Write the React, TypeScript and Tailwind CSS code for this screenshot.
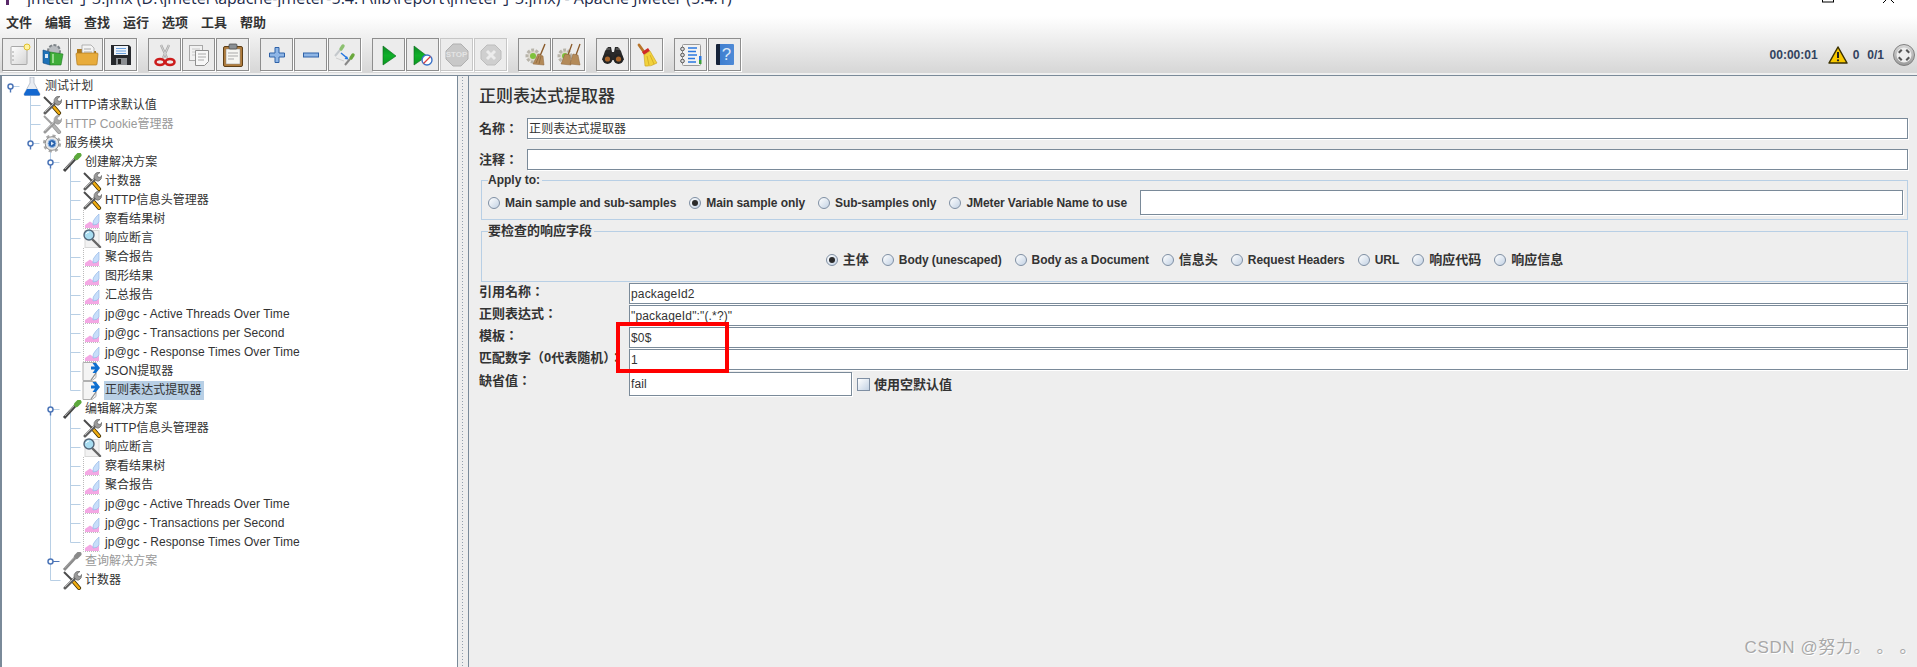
import React from "react";

const NewDoc = () => (
  <svg width="24" height="24" viewBox="0 0 24 24">
    <defs><linearGradient id="pg" x1="0" y1="0" x2="1" y2="1"><stop offset="0" stopColor="#fff" /><stop offset="1" stopColor="#d4d4d4" /></linearGradient></defs>
    <rect x="4" y="3.5" width="16" height="18" rx="1" fill="url(#pg)" stroke="#a8a8a8" />
    <circle cx="6" cy="9" r=".7" fill="#888" /><circle cx="6" cy="13" r=".7" fill="#888" /><circle cx="6" cy="17" r=".7" fill="#888" />
    <circle cx="20" cy="4" r="3" fill="#fff3a0" stroke="#e0c030" />
  </svg>
);
const Templates = () => (
  <svg width="24" height="24" viewBox="0 0 24 24">
    <circle cx="13" cy="8" r="6" fill="#b8bcc0" stroke="#7d8388" strokeWidth="2" strokeDasharray="3 1.5" />
    <path d="M2 7l7 2v13l-7-2z" fill="#1f72b8" stroke="#124a80" strokeWidth=".6" />
    <rect x="4" y="11" width="3" height="4" fill="#d9e8f5" />
    <path d="M9 9l13 2-2 11H9z" fill="#3fae3a" stroke="#1f7a22" strokeWidth=".6" />
    <path d="M12 11v9" stroke="#b6e8a8" strokeWidth="1.5" />
  </svg>
);
const OpenFolder = () => (
  <svg width="24" height="24" viewBox="0 0 24 24">
    <path d="M2 6h7l2 2h10v12H2z" fill="#b07a1c" />
    <path d="M7 2h9l3 3v11H7z" fill="#f4f4f4" stroke="#999" strokeWidth=".7" />
    <path d="M9 6h7M9 9h8M9 12h8" stroke="#aaa" />
    <path d="M1 11q0-1 1-1h20q1 0 1 1l-1 10q0 1-1 1H3q-1 0-1-1z" fill="#e8ac3c" stroke="#b07a1c" strokeWidth=".7" />
  </svg>
);
const Save = () => (
  <svg width="24" height="24" viewBox="0 0 24 24">
    <path d="M2 2h18l2 2v18H2z" fill="#26282c" />
    <rect x="5" y="3" width="14" height="9" fill="#eef3f9" />
    <path d="M7 5.5h10M7 8h10M7 10.5h10" stroke="#6aa0dc" />
    <rect x="7" y="15" width="11" height="7" fill="#8b8e92" />
    <rect x="9" y="16" width="3" height="5" fill="#222" />
  </svg>
);
const Cut = () => (
  <svg width="24" height="24" viewBox="0 0 24 24">
    <path d="M8 2l6 13M16 2l-6 13" stroke="#a8a8a8" strokeWidth="2.4" />
    <path d="M8 2l6 13M16 2l-6 13" stroke="#e6e6e6" strokeWidth=".7" />
    <ellipse cx="7" cy="19" rx="4.5" ry="3" fill="none" stroke="#cc1c1c" strokeWidth="2.6" />
    <ellipse cx="17" cy="19" rx="4.5" ry="3" fill="none" stroke="#cc1c1c" strokeWidth="2.6" />
  </svg>
);
const Copy = () => (
  <svg width="24" height="24" viewBox="0 0 24 24">
    <rect x="2.5" y="2.5" width="13" height="15" fill="#f1f1f1" stroke="#a8a8a8" />
    <path d="M5 6h8M5 9h8M5 12h8" stroke="#c8c8c8" />
    <path d="M8.5 7.5h13v11l-4 4h-9z" fill="#f7f7f7" stroke="#8e8e8e" />
    <path d="M11 11h8M11 14h8M11 17h6" stroke="#aaa" />
  </svg>
);
const Paste = () => (
  <svg width="24" height="24" viewBox="0 0 24 24">
    <rect x="2.5" y="3.5" width="19" height="20" rx="1.5" fill="#b07c3c" stroke="#5d3f18" />
    <rect x="5" y="6" width="14" height="15" fill="#f6f6f2" stroke="#888" strokeWidth=".5" />
    <path d="M7 10h10M7 13h10M7 16h6" stroke="#a9a9a9" />
    <rect x="8" y="1" width="8" height="5" rx="1" fill="#8a8f94" stroke="#444" strokeWidth=".7" />
  </svg>
);
const Plus = () => (
  <svg width="24" height="24" viewBox="0 0 24 24">
    <path d="M10 4.5h4v5.500h5.500v4H14v5.500h-4V14H4.500v-4H10z" fill="#8fb6e6" stroke="#2f62a8" />
  </svg>
);
const Minus = () => (
  <svg width="24" height="24" viewBox="0 0 24 24">
    <rect x="4.5" y="10" width="15" height="4" fill="#8fb6e6" stroke="#2f62a8" />
  </svg>
);
const Toggle = () => (
  <svg width="24" height="24" viewBox="0 0 24 24">
    <path d="M2 13l5-6" stroke="#c4c8cc" strokeWidth="2" /><path d="M8 6l2-3" stroke="#8cc070" strokeWidth="3.4" strokeLinecap="round" />
    <path d="M12 22l5-6" stroke="#888" strokeWidth="2" /><path d="M18 15l2-3" stroke="#6aa83c" strokeWidth="3.4" strokeLinecap="round" />
    <path d="M8 10l6 5" stroke="#2477e0" strokeWidth="1.5" /><path d="M15.5 16.5l-4-.6 2.400-3z" fill="#2477e0" />
    <path d="M3 15l8 3" stroke="#d0d0d0" />
  </svg>
);
const Play = () => (
  <svg width="24" height="24" viewBox="0 0 24 24">
    <defs><linearGradient id="pl" x1="0" y1="0" x2="0" y2="1"><stop offset="0" stopColor="#0c8a24" /><stop offset=".5" stopColor="#10b02a" /><stop offset="1" stopColor="#0a9a20" /></linearGradient></defs>
    <path d="M6 3l13 10L6 22z" fill="url(#pl)" stroke="#0a6a1c" strokeWidth=".6" />
  </svg>
);
const PlayNo = () => (
  <svg width="24" height="24" viewBox="0 0 24 24">
    <path d="M3 3l13 10L3 22z" fill="url(#pl)" stroke="#0a6a1c" strokeWidth=".6" />
    <circle cx="16" cy="17" r="5" fill="#fff" stroke="#3a72c8" strokeWidth="1.4" />
    <path d="M12.500 20.500l7-7" stroke="#d84040" strokeWidth="1.300" />
  </svg>
);
const Stop = () => (
  <div className="relative w-[24px] h-[24px] flex items-center justify-center">
    <svg className="absolute inset-0" width="24" height="24" viewBox="0 0 24 24"><path d="M8 1h8l7 7v8l-7 7H8l-7-7V8z" fill="#c8c8c8" stroke="#b0b0b0" /></svg>
    <span className="relative text-[8px] leading-none font-bold text-[#e4e4e4]">STOP</span>
  </div>
);
const Shut = () => (
  <svg width="24" height="24" viewBox="0 0 24 24">
    <path d="M8 2h8l6 6v8l-6 6H8l-6-6V8z" fill="#cfcfcf" stroke="#bdbdbd" />
    <path d="M8 8l8 8M16 8l-8 8" stroke="#ececec" strokeWidth="3" />
  </svg>
);
const GearSmall = ({ x = 0 }: { x?: number }) => (
  <g transform={`translate(${x} 0)`}>
    <circle cx="10" cy="13" r="6" fill="#dedad0" stroke="#b8b4aa" strokeWidth="3" strokeDasharray="2.800 1.500" />
    <circle cx="10" cy="13" r="3" fill="#7fc23c" />
  </g>
);
const Clear = () => (
  <svg width="24" height="24" viewBox="0 0 24 24">
    <GearSmall />
    <path d="M22 1l-5 12" stroke="#8a5a2a" strokeWidth="1.400" />
    <path d="M15 11l5 2 1 9-11-1z" fill="#b48a58" stroke="#8a6238" strokeWidth=".5" />
    <path d="M13 20l3-7M16 21l2-8" stroke="#7f5a30" strokeWidth=".6" />
  </svg>
);
const ClearAll = () => (
  <svg width="24" height="24" viewBox="0 0 24 24">
    <GearSmall x={-2} />
    <path d="M15 1l-4 11M23 1l-4 11" stroke="#8a5a2a" strokeWidth="1.300" />
    <path d="M8 11l5 1 1 10-10-1z" fill="#b48a58" stroke="#8a6238" strokeWidth=".5" />
    <path d="M16 11l5 1 2 10-10-1z" fill="#b48a58" stroke="#8a6238" strokeWidth=".5" />
  </svg>
);
const Binoculars = () => (
  <svg width="24" height="24" viewBox="0 0 24 24">
    <path d="M4 8l3-4h3l1 5h2l1-5h3l3 4 3 9H1z" fill="#2a2a2a" />
    <circle cx="6.500" cy="16" r="5" fill="#252525" /><circle cx="17.500" cy="16" r="5" fill="#252525" />
    <circle cx="6.500" cy="16" r="2.600" fill="#a8642a" /><circle cx="17.500" cy="16" r="2.600" fill="#a8642a" />
    <path d="M5 6h4M15 6h4" stroke="#777" />
  </svg>
);
const Broom = () => (
  <svg width="24" height="24" viewBox="0 0 24 24">
    <path d="M4 2l5 7" stroke="#b8742a" strokeWidth="2.800" strokeLinecap="round" />
    <path d="M7 9l6-4 2 3-6 4z" fill="#d02828" />
    <path d="M9 12l6-4 7 12q-6 4-12 3z" fill="#f2d23c" stroke="#c8a020" strokeWidth=".6" />
    <path d="M12 13l2 9M15 12l4 9" stroke="#c8a020" strokeWidth=".7" />
  </svg>
);
const FnList = () => (
  <svg width="24" height="24" viewBox="0 0 24 24">
    <rect x="3.500" y="1.500" width="18" height="21" rx="1" fill="#f2f2f2" stroke="#9a9a9a" />
    <path d="M9 5h9M9 8.500h8M9 12h9M9 15.500h7M9 19h8" stroke="#2a78e0" strokeWidth="1.300" />
    <circle cx="3.500" cy="6" r="1.800" fill="#ddd" stroke="#555" /><circle cx="3.500" cy="12" r="1.800" fill="#ddd" stroke="#555" /><circle cx="3.500" cy="18" r="1.800" fill="#ddd" stroke="#555" />
    <rect x="20" y="13" width="2.500" height="4" fill="#2a78e0" /><rect x="20" y="17" width="2.500" height="4" fill="#3aa03a" />
  </svg>
);
const Help = () => (
  <div className="w-[18px] h-[21px] flex items-center justify-center bg-[linear-gradient(90deg,#15233a_0,#15233a_22%,#3f7fd0_22%,#4f8ad6_100%)] rounded-[1px] text-[#dce8f8] text-[17px] leading-none pl-[4px]">?</div>
);

const Tools = ({ off = false }: { off?: boolean }) => (
  <svg width="20" height="19" viewBox="0 0 20 19">
    <path d="M2 1l8 8" stroke={off ? "#a0a0a0" : "#4a4a4a"} strokeWidth="2" />
    <path d="M11 10l6 7" stroke={off ? "#9a9a9a" : "#3f2f00"} strokeWidth="4.200" strokeLinecap="round" />
    <path d="M11 10l6 7" stroke={off ? "#b4b4b4" : "#f0ac10"} strokeWidth="2.600" strokeLinecap="round" />
    <path d="M3 17L14 6" stroke={off ? "#9a9a9a" : "#5f5f5f"} strokeWidth="3" strokeLinecap="round" />
    <path d="M3 16L13 6" stroke={off ? "#c8c8c8" : "#cfcfcf"} strokeWidth=".8" />
    <path d="M12 6q-.5-3 2-5 2-1 4-.5l-3 2.500 1 2 2.500.5 1-2q.5 4-2.500 5.500-2 .5-3-.5z" fill={off ? "#a8a8a8" : "#9a9a9a"} stroke={off ? "#909090" : "#555"} strokeWidth=".6" />
  </svg>
);
const Flask = () => (
  <svg width="20" height="19" viewBox="0 0 20 19">
    <path d="M8 0h4v6l6 11q0 1.500-1 1.500H3Q2 18.500 2 17L8 6z" fill="#e8ecf2" stroke="#a8b0bc" strokeWidth=".7" />
    <path d="M5 12h10l3 5q0 1.500-1 1.500H3Q2 18.500 2 17z" fill="#1468d0" />
  </svg>
);
const Gear = () => (
  <svg width="20" height="19" viewBox="0 0 20 19">
    <circle cx="10" cy="9.500" r="7.600" fill="none" stroke="#a8a8a8" strokeWidth="3" strokeDasharray="3 3" />
    <circle cx="10" cy="9.500" r="6.800" fill="#e8e8e8" stroke="#8f8f8f" />
    <circle cx="10" cy="9.500" r="4" fill="#2a62ac" stroke="#9cc0ea" />
    <path d="M9 7.500l3 2-3 2z" fill="#dbe8f8" />
  </svg>
);
const Pipette = ({ off = false }: { off?: boolean }) => (
  <svg width="20" height="19" viewBox="0 0 20 19">
    <path d="M2 18L13 6" stroke={off ? "#8a8a8a" : "#454545"} strokeWidth="3" />
    <path d="M3 16L12 6" stroke={off ? "#a8a8a8" : "#d0d0d0"} strokeWidth=".8" />
    <path d="M14.500 4.500l2.500-2.500" stroke={off ? "#8a8a8a" : "#5ca83c"} strokeWidth="5" strokeLinecap="round" />
  </svg>
);
const Chart = () => (
  <svg width="20" height="19" viewBox="0 0 20 19">
    <path d="M1.500 0v18.500h16" fill="none" stroke="#bbb" strokeDasharray="1 1" />
    <path d="M3 18v-3l5-3.500 3 2 1 4.500z" fill="#f4a8e4" />
    <path d="M9 18l1-4 4-1 3-9v14z" fill="#f4a8e4" />
    <path d="M11 15q-1-4 3-8l3-3v8q-1 3-6 3z" fill="#c8defa" stroke="#8fb4e4" strokeWidth=".6" />
  </svg>
);
const Magnifier = () => (
  <svg width="20" height="19" viewBox="0 0 20 19">
    <rect x="3" y="1.500" width="14" height="17" fill="#f2f2f2" stroke="#d8d8d8" />
    <path d="M11 11l7 7" stroke="#666" strokeWidth="2.400" strokeLinecap="round" />
    <circle cx="7" cy="6" r="5" fill="#a8dcf0" stroke="#506478" strokeWidth="1.400" />
    <path d="M4 5q1-2 3-2" stroke="#fff" fill="none" />
  </svg>
);
const Extractor = () => (
  <svg width="20" height="19" viewBox="0 0 20 19">
    <path d="M1 .5h13v15l-4 3H1z" fill="#f4f4f4" stroke="#b0b0b0" />
    <path d="M9 18l5-7" stroke="#888" strokeWidth="1.200" />
    <path d="M10.500 1h3.500l4 5-4 5h-3.500l2.500-3.500H9v-3h4z" fill="#0f6fd0" />
  </svg>
);

type Row = { t: string; l: 0 | 1 | 2 | 3; i: React.ReactNode; off?: boolean; sel?: boolean };
const jp = (s: string): Row => ({ t: "jp@gc - " + s, l: 3, i: <Chart /> });
const rows: Row[] = [
  { t: "测试计划", l: 0, i: <Flask /> },
  { t: "HTTP请求默认值", l: 1, i: <Tools /> },
  { t: "HTTP Cookie管理器", l: 1, i: <Tools off />, off: true },
  { t: "服务模块", l: 1, i: <Gear /> },
  { t: "创建解决方案", l: 2, i: <Pipette /> },
  { t: "计数器", l: 3, i: <Tools /> },
  { t: "HTTP信息头管理器", l: 3, i: <Tools /> },
  { t: "察看结果树", l: 3, i: <Chart /> },
  { t: "响应断言", l: 3, i: <Magnifier /> },
  { t: "聚合报告", l: 3, i: <Chart /> },
  { t: "图形结果", l: 3, i: <Chart /> },
  { t: "汇总报告", l: 3, i: <Chart /> },
  jp("Active Threads Over Time"),
  jp("Transactions per Second"),
  jp("Response Times Over Time"),
  { t: "JSON提取器", l: 3, i: <Extractor /> },
  { t: "正则表达式提取器", l: 3, i: <Extractor />, sel: true },
  { t: "编辑解决方案", l: 2, i: <Pipette /> },
  { t: "HTTP信息头管理器", l: 3, i: <Tools /> },
  { t: "响应断言", l: 3, i: <Magnifier /> },
  { t: "察看结果树", l: 3, i: <Chart /> },
  { t: "聚合报告", l: 3, i: <Chart /> },
  jp("Active Threads Over Time"),
  jp("Transactions per Second"),
  jp("Response Times Over Time"),
  { t: "查询解决方案", l: 2, i: <Pipette off />, off: true },
  { t: "计数器", l: 2, i: <Tools /> },
];
const indent = ["pl-[20px]", "pl-[40px]", "pl-[60px]", "pl-[80px]"];
const ry = (i: number) => 10.5 + 19 * i;

const Handle = ({ x, i, open = true }: { x: number; i: number; open?: boolean }) => {
  const y = ry(i);
  return (
    <g>
      <line x1={x} y1={y} x2={x + 9} y2={y} stroke={open ? "#b8cfe5" : "#4d76b8"} />
      {open && <line x1={x} y1={y} x2={x} y2={y + 6} stroke="#4d76b8" strokeWidth="1.400" />}
      <circle cx={x} cy={y} r="2.500" fill="#fff" stroke="#4d76b8" strokeWidth="1.500" />
    </g>
  );
};

const TreeLines = () => {
  const stubs: [number, number][] = [[28.5, 1], [28.5, 2], [48.5, 26]];
  for (let i = 5; i <= 16; i++) stubs.push([68.5, i]);
  for (let i = 18; i <= 24; i++) stubs.push([68.5, i]);
  return (
    <svg className="absolute left-0 top-0" width="90" height="540">
      <g stroke="#b8cfe5">
        <line x1="28.5" y1={ry(0)} x2="28.5" y2={ry(3)} />
        <line x1="48.5" y1={ry(3)} x2="48.5" y2={ry(26)} />
        <line x1="68.5" y1={ry(4)} x2="68.5" y2={ry(16)} />
        <line x1="68.5" y1={ry(17)} x2="68.5" y2={ry(24)} />
        {stubs.map(([x, i]) => <line key={x + "-" + i} x1={x} y1={ry(i)} x2={x + 10} y2={ry(i)} />)}
      </g>
      <Handle x={8.5} i={0} />
      <Handle x={28.5} i={3} />
      <Handle x={48.5} i={4} />
      <Handle x={48.5} i={17} />
      <Handle x={48.5} i={25} open={false} />
    </svg>
  );
};

const TB = ({ children, off = false }: { children: React.ReactNode; off?: boolean }) => (
  <div className={`w-[33px] h-[33px] flex items-center justify-center border bg-[#ececec] shadow-[1px_1px_0_#fff] ${off ? "border-[#c6c6c6]" : "border-[#8e8e8e]"}`}>{children}</div>
);

const Radio = ({ on = false }: { on?: boolean }) => (
  <span className="w-[12px] h-[12px] shrink-0 rounded-full border border-[#7f8fa3] bg-[linear-gradient(135deg,#ffffff,#c3d2e4)] flex items-center justify-center">
    {on && <span className="w-[6px] h-[6px] rounded-full bg-[#2b2b2b]" />}
  </span>
);
const RadioItem = ({ label, on = false, cjk = false }: { label: string; on?: boolean; cjk?: boolean }) => (
  <div className="flex items-center gap-[5px]">
    <Radio on={on} />
    <span className={`font-bold text-[#333] whitespace-nowrap ${cjk ? "text-[13px]" : "text-[12px] tracking-[-0.08px]"}`}>{label}</span>
  </div>
);
const Field = ({ value = "", className = "flex-1" }: { value?: string; className?: string }) => (
  <div className={`${className} h-full bg-white border border-[#7a8a99] shadow-[1px_1px_0_#fff] flex items-center pl-[1px] text-[12px] text-[#333] tracking-[0.15px] whitespace-nowrap overflow-hidden`}>{value}</div>
);
const labelCls = "font-['Liberation_Sans','Noto_Sans_CJK_TC',sans-serif] font-bold text-[13px] text-[#333] whitespace-nowrap";
const Fields = ({ label, value }: { label: string; value: string }) => (
  <div className="flex h-[21px]">
    <div className={`w-[150px] h-[18px] leading-[18px] ${labelCls}`}>{label}</div>
    <Field value={value} />
  </div>
);

export default function App() {
  return (
    <div className="w-full h-[667px] overflow-hidden flex flex-col bg-[#eeeeee] font-['Liberation_Sans','Noto_Sans_CJK_SC',sans-serif]">
      <header className="h-[75px] shrink-0 bg-[linear-gradient(180deg,#ffffff_0,#ffffff_16px,#d7d7d7_72px,#d7d7d7_73px,#f0f0f0_73px)]">
        <div className="h-[7px] overflow-hidden flex items-end">
          <svg className="ml-[6px] mb-[2px]" width="3" height="5"><rect width="3" height="5" fill="#5a2a6a" /></svg>
          <span className="ml-[18px] text-[16px] leading-[18px] text-[#1d2a4a] font-['Open_Sans','Noto_Sans_CJK_SC',sans-serif] whitespace-nowrap">jmeter子3.jmx (D:\jmeter\apache-jmeter-5.4.1\lib\report\jmeter子3.jmx) - Apache JMeter (5.4.1)</span>
          <div className="ml-auto mr-[22px] self-start flex gap-[47px]">
            <svg width="13" height="3"><rect x=".5" y="-3" width="11" height="5" fill="none" stroke="#000" /></svg>
            <svg width="13" height="3"><path d="M1 3l3-3M12 3l-3-3" stroke="#000" /></svg>
          </div>
        </div>
        <nav className="h-[31px] flex items-center pl-[6px] text-[13px] font-semibold text-[#333]">
          {["文件", "编辑", "查找", "运行", "选项", "工具", "帮助"].map((m) => <span key={m} className="w-[39px]">{m}</span>)}
        </nav>
        <div className="h-[33px] flex items-center gap-[11px] pl-[2px] pr-[2px]">
          <div className="flex gap-[1px]"><TB><NewDoc /></TB><TB><Templates /></TB><TB><OpenFolder /></TB><TB><Save /></TB></div>
          <div className="flex gap-[1px]"><TB><Cut /></TB><TB><Copy /></TB><TB><Paste /></TB></div>
          <div className="flex gap-[1px]"><TB><Plus /></TB><TB><Minus /></TB><TB><Toggle /></TB></div>
          <div className="flex gap-[1px]"><TB><Play /></TB><TB><PlayNo /></TB><TB off><Stop /></TB><TB off><Shut /></TB></div>
          <div className="flex gap-[1px]"><TB><Clear /></TB><TB><ClearAll /></TB></div>
          <div className="flex gap-[1px]"><TB><Binoculars /></TB><TB><Broom /></TB></div>
          <div className="flex gap-[1px]"><TB><FnList /></TB><TB><Help /></TB></div>
          <div className="ml-auto flex items-center text-[12px] font-bold text-[#33435f]">
            <span>00:00:01</span>
            <svg className="ml-[10px]" width="20" height="18" viewBox="0 0 20 18"><path d="M10 1l9 16H1z" fill="#f8c800" stroke="#3a3000" strokeWidth="1.500" strokeLinejoin="round" /><path d="M10 6v6" stroke="#222" strokeWidth="2" /><circle cx="10" cy="14.300" r="1.100" fill="#222" /></svg>
            <span className="ml-[5px]">0</span>
            <span className="ml-[8px]">0/1</span>
            <svg className="ml-[9px]" width="22" height="22" viewBox="0 0 22 22">
              <defs><linearGradient id="lg" x1="0" y1="0" x2="0" y2="1"><stop offset="0" stopColor="#d8d8d8" /><stop offset="1" stopColor="#9a9a9a" /></linearGradient></defs>
              <circle cx="11" cy="11" r="10.500" fill="url(#lg)" stroke="#808080" />
              <circle cx="11" cy="11" r="7.500" fill="#eee" />
              <path d="M5 8l3-3 1.500 1.500L6.500 9.500zM17 8l-3-3-1.500 1.500 3 3zM5 14l3 3 1.500-1.500-3-3zM17 14l-3 3-1.500-1.500 3-3z" fill="#555" />
            </svg>
          </div>
        </div>
      </header>

      <main className="flex-1 min-h-0 flex border-t border-[#7a8a99]">
        <section className="relative w-[458px] shrink-0 bg-white border-l-2 border-r border-[#7a8a99] pt-[1px]">
          <TreeLines />
          {rows.map((r, i) => (
            <div key={i} className={`relative h-[19px] flex items-center text-[12px] tracking-[0.06px] ${indent[r.l]} ${r.off ? "text-[#999]" : "text-[#333]"}`}>
              <span className="w-[20px] h-[19px] shrink-0">{r.i}</span>
              <span className={`ml-[2px] pl-[1px] pr-[3px] leading-[19px] whitespace-nowrap ${r.sel ? "bg-[#b8cfe5]" : ""}`}>{r.t}</span>
            </div>
          ))}
        </section>
        <div className="w-[10px] shrink-0 bg-[#eeeeee] px-[3px]"><div className="h-full bg-[radial-gradient(circle,#93a0ae_0.7px,transparent_0.9px)] bg-[length:3px_3px]" /></div>
        <section className="relative flex-1 min-w-0 border-l border-[#7a8a99] pl-[10px] pr-[9px]">
          <h1 className="h-[42px] flex items-center text-[17px] font-medium text-[#333]">正则表达式提取器</h1>
          <div className="flex items-center h-[21px]">
            <div className={`w-[48px] ${labelCls}`}>名称：</div>
            <Field value="正则表达式提取器" />
          </div>
          <div className="flex items-center h-[21px] mt-[10px]">
            <div className={`w-[48px] ${labelCls}`}>注释：</div>
            <Field />
          </div>
          <fieldset className="mt-[3px] ml-[2px] h-[47px] border border-[#b8cfe5] px-[6px] pr-[4px]">
            <legend className="h-[14px] leading-[14px] text-[12px] font-bold text-[#333] pr-[2px]">Apply to:</legend>
            <div className="flex items-center gap-[13px] h-[25px] mt-[3px]">
              <RadioItem label="Main sample and sub-samples" />
              <RadioItem label="Main sample only" on />
              <RadioItem label="Sub-samples only" />
              <RadioItem label="JMeter Variable Name to use" />
              <Field />
            </div>
          </fieldset>
          <fieldset className="mt-[4px] ml-[2px] h-[58px] border border-[#b8cfe5] px-[6px]">
            <legend className="h-[14px] leading-[14px] text-[13px] font-bold text-[#333] pr-[2px]">要检查的响应字段</legend>
            <div className="flex items-center justify-center gap-[13px] h-[43px]">
              <RadioItem label="主体" on cjk />
              <RadioItem label="Body (unescaped)" />
              <RadioItem label="Body as a Document" />
              <RadioItem label="信息头" cjk />
              <RadioItem label="Request Headers" />
              <RadioItem label="URL" />
              <RadioItem label="响应代码" cjk />
              <RadioItem label="响应信息" cjk />
            </div>
          </fieldset>
          <div className="relative mt-[1px] flex flex-col gap-[1px]">
            <Fields label="引用名称：" value="packageId2" />
            <Fields label="正则表达式：" value={'"packageId":"(.*?)"'} />
            <Fields label="模板：" value="$0$" />
            <Fields label="匹配数字（0代表随机）：" value="1" />
            <div className="flex h-[24px] mt-[1px]">
              <div className={`w-[150px] h-[18px] leading-[18px] ${labelCls}`}>缺省值：</div>
              <Field value="fail" className="w-[223px]" />
              <div className="flex items-center ml-[5px] gap-[4px] pt-[1px]">
                <span className="w-[13px] h-[13px] border border-[#7f8fa3] bg-[linear-gradient(135deg,#ffffff,#c3d2e4)]" />
                <span className="text-[13px] font-bold text-[#333]">使用空默认值</span>
              </div>
            </div>
            <div className="absolute left-[137px] top-[39px] w-[113px] h-[51px] border-[4px] border-[#ff0000]" />
          </div>
          <div className="absolute right-0 bottom-[7px] text-[17px] tracking-[0.6px] text-[#a8a8a8] [text-shadow:1px_1px_0_#fff] whitespace-nowrap">CSDN @努力。 。 。</div>
        </section>
      </main>
    </div>
  );
}
